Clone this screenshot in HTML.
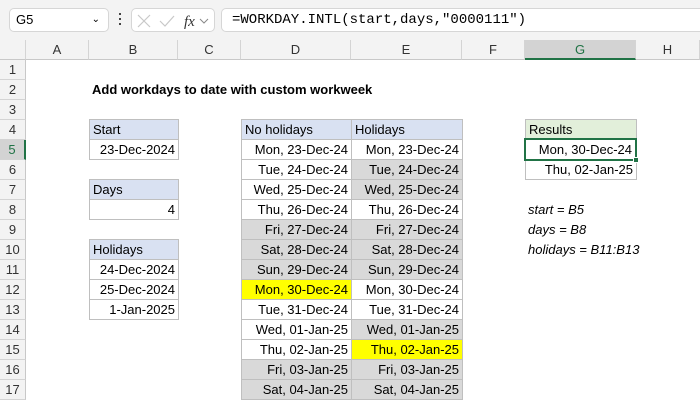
<!DOCTYPE html>
<html><head><style>
*{margin:0;padding:0;box-sizing:border-box}
body{width:700px;height:400px;overflow:hidden;background:#fff;font-family:"Liberation Sans",sans-serif;position:relative}
.a{position:absolute}
.top{left:0;top:0;width:700px;height:40px;background:#f3f3f3}
.box{background:#fff;border:1px solid #d6d6d6;border-radius:5px}
.ch{top:40px;height:20px;background:#f3f3f3;border-right:1px solid #d4d4d4;border-bottom:1px solid #c8c8c8;font-size:13px;color:#333;text-align:center;line-height:20px}
.rh{left:0;width:26px;height:20px;background:#f3f3f3;border-bottom:1px solid #d4d4d4;border-right:1px solid #c8c8c8;font-size:13px;color:#333;text-align:center;line-height:20px}
.c{height:21px;border:1px solid #bfbfbf;font-size:13px;line-height:19px;padding:0 3px;text-align:right;color:#000;white-space:nowrap;overflow:hidden}
.h{background:#d9e1f2;text-align:left}
.g{background:#d9d9d9}
.y{background:#ffff00}
.t{font-size:13px;font-style:italic;white-space:nowrap}
</style></head><body>
<div class="a top"></div>
<div class="a box" style="left:9px;top:8px;width:100px;height:24px;font-size:13px;line-height:22px;padding-left:6px">G5<span style="position:absolute;right:8px;top:0;font-size:10px">&#8964;</span></div>
<div class="a" style="left:119px;top:13px;width:2px;height:2px;background:#444;box-shadow:0 5px 0 #444,0 10px 0 #444"></div>
<div class="a box" style="left:131px;top:8px;width:84px;height:24px">
<svg width="84" height="24" style="position:absolute;left:0;top:0"><path d="M6 6 L18 18 M18 6 L6 18" stroke="#c8c8c8" stroke-width="1.2" fill="none"/><path d="M28 12 L33 17 L42 7" stroke="#c8c8c8" stroke-width="1.2" fill="none"/><text x="52" y="17" font-family="Liberation Serif" font-style="italic" font-size="15" fill="#333">fx</text><path d="M68 10 L72 14 L76 10" stroke="#888" fill="none"/></svg></div>
<div class="a box" style="left:221px;top:8px;width:479px;height:24px;font-family:'Liberation Mono',monospace;font-size:14px;line-height:22px;padding-left:10px;border-right:none;border-radius:5px 0 0 5px">=WORKDAY.INTL(start,days,"0000111")</div>

<div class="a ch" style="left:0;width:26px"></div>
<div class="a ch" style="left:26px;width:63px">A</div>
<div class="a ch" style="left:89px;width:89px">B</div>
<div class="a ch" style="left:178px;width:63px">C</div>
<div class="a ch" style="left:241px;width:110px">D</div>
<div class="a ch" style="left:351px;width:111px">E</div>
<div class="a ch" style="left:462px;width:63px">F</div>
<div class="a ch" style="left:525px;width:111px;background:#d3d3d3;color:#217346;border-bottom:2px solid #217346">G</div>
<div class="a ch" style="left:636px;width:64px">H</div>

<div class="a rh" style="top:60px">1</div><div class="a rh" style="top:80px">2</div><div class="a rh" style="top:100px">3</div><div class="a rh" style="top:120px">4</div>
<div class="a rh" style="top:140px;background:#d3d3d3;color:#217346;border-right:2px solid #217346">5</div>
<div class="a rh" style="top:160px">6</div><div class="a rh" style="top:180px">7</div><div class="a rh" style="top:200px">8</div><div class="a rh" style="top:220px">9</div><div class="a rh" style="top:240px">10</div><div class="a rh" style="top:260px">11</div><div class="a rh" style="top:280px">12</div><div class="a rh" style="top:300px">13</div><div class="a rh" style="top:320px">14</div><div class="a rh" style="top:340px">15</div><div class="a rh" style="top:360px">16</div><div class="a rh" style="top:380px">17</div>

<div class="a" style="left:92px;top:80px;height:20px;line-height:20px;font-size:13px;font-weight:bold">Add workdays to date with custom workweek</div>

<div class="a c h" style="left:89px;top:119px;width:90px">Start</div>
<div class="a c" style="left:89px;top:139px;width:90px">23-Dec-2024</div>
<div class="a c h" style="left:89px;top:179px;width:90px">Days</div>
<div class="a c" style="left:89px;top:199px;width:90px">4</div>
<div class="a c h" style="left:89px;top:239px;width:90px">Holidays</div>
<div class="a c" style="left:89px;top:259px;width:90px">24-Dec-2024</div>
<div class="a c" style="left:89px;top:279px;width:90px">25-Dec-2024</div>
<div class="a c" style="left:89px;top:299px;width:90px">1-Jan-2025</div>

<div class="a c h" style="left:241px;top:119px;width:111px">No holidays</div>
<div class="a c h" style="left:351px;top:119px;width:112px">Holidays</div>

<div class="a c" style="left:241px;top:139px;width:111px">Mon, 23-Dec-24</div>
<div class="a c" style="left:241px;top:159px;width:111px">Tue, 24-Dec-24</div>
<div class="a c" style="left:241px;top:179px;width:111px">Wed, 25-Dec-24</div>
<div class="a c" style="left:241px;top:199px;width:111px">Thu, 26-Dec-24</div>
<div class="a c g" style="left:241px;top:219px;width:111px">Fri, 27-Dec-24</div>
<div class="a c g" style="left:241px;top:239px;width:111px">Sat, 28-Dec-24</div>
<div class="a c g" style="left:241px;top:259px;width:111px">Sun, 29-Dec-24</div>
<div class="a c y" style="left:241px;top:279px;width:111px">Mon, 30-Dec-24</div>
<div class="a c" style="left:241px;top:299px;width:111px">Tue, 31-Dec-24</div>
<div class="a c" style="left:241px;top:319px;width:111px">Wed, 01-Jan-25</div>
<div class="a c" style="left:241px;top:339px;width:111px">Thu, 02-Jan-25</div>
<div class="a c g" style="left:241px;top:359px;width:111px">Fri, 03-Jan-25</div>
<div class="a c g" style="left:241px;top:379px;width:111px">Sat, 04-Jan-25</div>

<div class="a c" style="left:351px;top:139px;width:112px">Mon, 23-Dec-24</div>
<div class="a c g" style="left:351px;top:159px;width:112px">Tue, 24-Dec-24</div>
<div class="a c g" style="left:351px;top:179px;width:112px">Wed, 25-Dec-24</div>
<div class="a c" style="left:351px;top:199px;width:112px">Thu, 26-Dec-24</div>
<div class="a c g" style="left:351px;top:219px;width:112px">Fri, 27-Dec-24</div>
<div class="a c g" style="left:351px;top:239px;width:112px">Sat, 28-Dec-24</div>
<div class="a c g" style="left:351px;top:259px;width:112px">Sun, 29-Dec-24</div>
<div class="a c" style="left:351px;top:279px;width:112px">Mon, 30-Dec-24</div>
<div class="a c" style="left:351px;top:299px;width:112px">Tue, 31-Dec-24</div>
<div class="a c g" style="left:351px;top:319px;width:112px">Wed, 01-Jan-25</div>
<div class="a c y" style="left:351px;top:339px;width:112px">Thu, 02-Jan-25</div>
<div class="a c g" style="left:351px;top:359px;width:112px">Fri, 03-Jan-25</div>
<div class="a c g" style="left:351px;top:379px;width:112px">Sat, 04-Jan-25</div>

<div class="a c h" style="left:525px;top:119px;width:112px;background:#e2efda">Results</div>
<div class="a c" style="left:525px;top:159px;width:112px">Thu, 02-Jan-25</div>
<div class="a c" style="left:524px;top:138px;width:113px;height:23px;border:2px solid #217346;line-height:19px">Mon, 30-Dec-24</div>
<div class="a" style="left:633px;top:157px;width:6px;height:6px;background:#217346;border:1px solid #fff"></div>

<div class="a t" style="left:528px;top:200px;line-height:20px">start = B5</div>
<div class="a t" style="left:528px;top:220px;line-height:20px">days = B8</div>
<div class="a t" style="left:528px;top:240px;line-height:20px">holidays = B11:B13</div>
</body></html>
